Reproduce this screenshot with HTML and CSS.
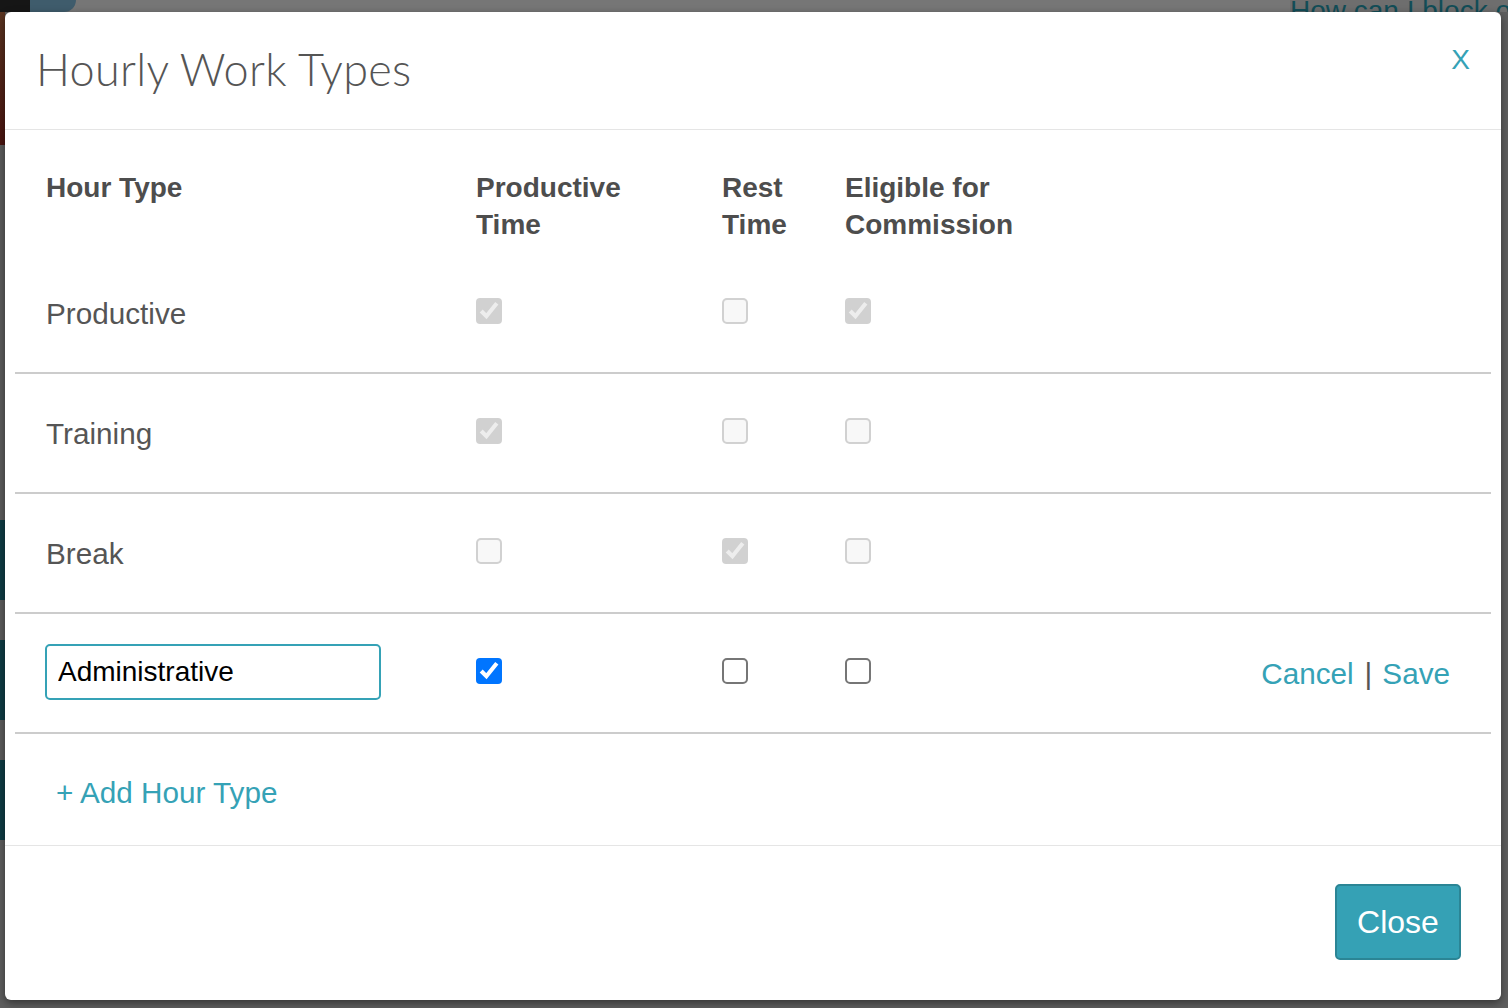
FILE: index.html
```html
<!DOCTYPE html>
<html>
<head>
<meta charset="utf-8">
<link rel="stylesheet" href="styles.css">
</head>
<body>
<div class="page">
  <div class="topbar">
    <div class="tb-black"></div>
    <div class="tb-blue"></div>
    <div class="tb-grey"></div>
    <div class="tb-link">How can I block o</div>
  </div>
  <div class="side">
    <div class="s-brown"></div>
    <div class="s-grey s1"></div>
    <div class="s-teal"></div>
    <div class="s-grey s2"></div>
    <div class="s-teal"></div>
    <div class="s-grey s2"></div>
    <div class="s-teal"></div>
  </div>
</div>

<div class="modal">
  <div class="modal-header">
    <h1 class="modal-title">Hourly Work Types</h1>
    <span class="modal-x">X</span>
  </div>
  <div class="modal-body">
    <div class="grid head">
      <div class="cell">Hour Type</div>
      <div class="cell">Productive<br>Time</div>
      <div class="cell">Rest<br>Time</div>
      <div class="cell">Eligible for<br>Commission</div>
    </div>
    <div class="grid row">
      <div class="cell name">Productive</div>
      <div class="cell"><input type="checkbox" class="cb" checked disabled></div>
      <div class="cell"><input type="checkbox" class="cb" disabled></div>
      <div class="cell"><input type="checkbox" class="cb" checked disabled></div>
    </div>
    <div class="grid row">
      <div class="cell name">Training</div>
      <div class="cell"><input type="checkbox" class="cb" checked disabled></div>
      <div class="cell"><input type="checkbox" class="cb" disabled></div>
      <div class="cell"><input type="checkbox" class="cb" disabled></div>
    </div>
    <div class="grid row">
      <div class="cell name">Break</div>
      <div class="cell"><input type="checkbox" class="cb" disabled></div>
      <div class="cell"><input type="checkbox" class="cb" checked disabled></div>
      <div class="cell"><input type="checkbox" class="cb" disabled></div>
    </div>
    <div class="grid row edit">
      <div class="cell"><input type="text" class="txt" value="Administrative"></div>
      <div class="cell"><input type="checkbox" class="cb" checked></div>
      <div class="cell"><input type="checkbox" class="cb"></div>
      <div class="cell actions"><input type="checkbox" class="cb"><span class="links"><span class="lnk">Cancel</span><span class="sep">|</span><span class="lnk">Save</span></span></div>
    </div>
    <div class="add"><span class="lnk">+ Add Hour Type</span></div>
  </div>
  <div class="modal-footer">
    <button class="btn">Close</button>
  </div>
</div>
</body>
</html>
```
FILE: styles.css
```css
html, body {
  margin: 0;
  padding: 0;
}
body {
  width: 1508px;
  height: 1008px;
  overflow: hidden;
  background: #5e5e5e;
  font-family: "Liberation Sans", Arial, sans-serif;
  position: relative;
}
.page {
  display: flex;
  flex-direction: column;
  height: 1008px;
}
.topbar {
  display: flex;
  height: 12px;
  background: #777;
}
.tb-black { width: 30px; background: #161616; }
.tb-blue { width: 46px; background: #3f5c6c; border-radius: 0 0 30px 0; }
.tb-grey { flex: 1; background: #767676; }
.tb-link {
  color: #124d57;
  font-size: 28px;
  line-height: 22px;
  height: 12px;
  overflow: hidden;
  width: 218px;
  background: #6e6e6e;
  white-space: nowrap;
}
.side {
  display: flex;
  flex-direction: column;
  width: 5px;
  flex: 1;
}
.s-brown { height: 133px; background: linear-gradient(#5a3420, #4a1410); }
.s-grey { background: #5c5c5c; }
.s1 { height: 375px; }
.s2 { height: 40px; }
.s-teal { height: 80px; background: #0f3c44; }

.modal {
  position: absolute;
  left: 5px;
  top: 12px;
  width: 1496px;
  height: 988px;
  background: #fff;
  border-radius: 6px;
  box-shadow: 0 3px 8px rgba(0,0,0,0.45);
  display: flex;
  flex-direction: column;
  color: #555;
}
.modal-header {
  height: 117px;
  border-bottom: 1px solid #e5e5e5;
  display: flex;
  align-items: center;
  justify-content: space-between;
  padding: 0 31px 0 31px;
}
.modal-title {
  margin: 0;
  font-family: Lato, "Open Sans", sans-serif;
  font-weight: 300;
  font-size: 45px;
  color: #555;
  letter-spacing: 0.3px;
  position: relative;
  top: -2px;
}
.modal-x {
  color: #35a2b6;
  font-family: "Liberation Sans", Arial, sans-serif;
  font-size: 28px;
  position: relative;
  top: -11px;
}
.modal-body {
  padding: 39px 10px 0 10px;
  flex: 0 0 auto;
}
.grid {
  display: grid;
  grid-template-columns: 430px 246px 123px 1fr;
  padding-left: 31px;
  font-size: 28px;
  line-height: 37px;
}
.head {
  font-weight: bold;
  color: #4d4d4d;
  padding-bottom: 11px;
}
.row {
  height: 118px;
  border-bottom: 2px solid #cccccc;
  align-items: center;
}
.row .cell {
  display: flex;
  align-items: center;
}
.name {
  font-size: 29.7px;
}
.cb {
  zoom: 2;
  margin: 0;
  position: relative;
  top: -1px;
}
.txt {
  width: 336px;
  height: 56px;
  box-sizing: border-box;
  border: 2px solid #35a2b6;
  border-radius: 5px;
  padding: 0 11px;
  font-family: "Liberation Sans", Arial, sans-serif;
  font-size: 28px;
  color: #000;
  outline: none;
  margin-left: -1px;
  position: relative;
  top: -1px;
}
.actions {
  justify-content: space-between;
  padding-right: 41px;
}
.links {
  font-size: 29.7px;
}
.lnk {
  color: #35a2b6;
}
.sep {
  color: #555;
  margin: 0 10px 0 11px;
}
.add {
  height: 111px;
  display: flex;
  align-items: center;
  padding-left: 41px;
  font-size: 29.7px;
  box-sizing: border-box;
  padding-top: 6px;
}
.modal-footer {
  border-top: 1px solid #e5e5e5;
  display: flex;
  justify-content: flex-end;
  padding: 38px 40px 0 0;
}
.btn {
  width: 126px;
  height: 76px;
  background: #35a1b5;
  border: 2px solid #2b8595;
  border-radius: 5px;
  color: #fff;
  font-family: "Liberation Sans", Arial, sans-serif;
  font-size: 32px;
  padding: 0;
}
```
